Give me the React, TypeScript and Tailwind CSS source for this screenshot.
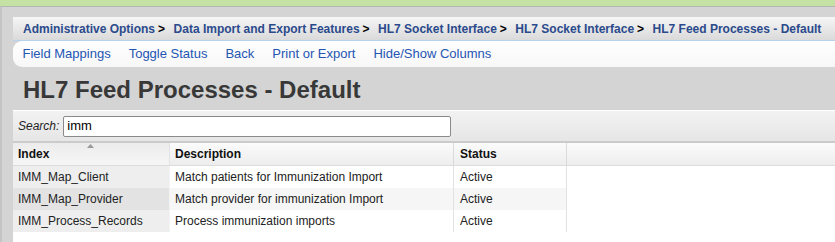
const crumbs = [
  'Administrative Options',
  'Data Import and Export Features',
  'HL7 Socket Interface',
  'HL7 Socket Interface',
  'HL7 Feed Processes - Default',
];

const actions = ['Field Mappings', 'Toggle Status', 'Back', 'Print or Export', 'Hide/Show Columns'];

const rows = [
  { index: 'IMM_Map_Client', description: 'Match patients for Immunization Import', status: 'Active' },
  { index: 'IMM_Map_Provider', description: 'Match provider for immunization Import', status: 'Active' },
  { index: 'IMM_Process_Records', description: 'Process immunization imports', status: 'Active' },
];

export default function App() {
  return (
    <div className="w-[835px] h-[242px] overflow-hidden flex flex-col bg-white font-['Liberation_Sans',Arial,sans-serif]">
      {/* top strip */}
      <div className="h-[6px] shrink-0 bg-[#c5e2a5]" />

      <div className="flex-1 flex flex-col bg-[#d4d4d4] border-t border-[#b4b4b4] border-l-2 border-l-[#c4c4c4]">
        {/* breadcrumb + toolbar */}
        <div className="pl-[11px] pt-[10px]">
          <div className="h-[24px] flex items-center pl-[10px] bg-gradient-to-b from-[#f6f6f6] to-[#dadada] border-b border-[#b5d2ef] text-[12px] font-bold text-[#2b4a8c] whitespace-nowrap">
            {crumbs.map((c, i) => (
              <span key={i} className="flex items-center">
                <span>{c}</span>
                {i < crumbs.length - 1 && <span className="text-black ml-[3px] mr-[8.5px]">&gt;</span>}
              </span>
            ))}
          </div>
          <div className="h-[26px] flex items-center pl-[0.5px] rounded-bl-[9px] rounded-tl-[9px] bg-gradient-to-b from-white to-[#f7f7f7] text-[13px] text-[#2455b3] whitespace-nowrap">
            {actions.map((a) => (
              <span key={a} className="px-[9px]">
                {a}
              </span>
            ))}
          </div>
        </div>

        {/* title */}
        <div className="h-[43px] shrink-0 flex items-center pl-[21px] pt-[2px]">
          <h1 className="text-[24px] font-bold text-[#383838] leading-none">HL7 Feed Processes - Default</h1>
        </div>

        {/* search + table panel */}
        <div className="flex-1 ml-[11px] bg-white flex flex-col">
          <div className="h-[33px] shrink-0 flex items-center pl-[5px] border-t border-white bg-gradient-to-b from-[#f2f2f2] to-[#e6e6e6] border-b-2 border-b-[#cbcbcb]">
            <span className="text-[12px] italic text-[#222] mr-[4px]">Search:</span>
            <div className="w-[388px] h-[21px] border border-[#8a8a8a] rounded-[2px] bg-white flex items-center pl-[3px] text-[13px] text-black">
              imm
            </div>
          </div>

          {/* header */}
          <div className="h-[23px] shrink-0 flex text-[12px] font-bold text-[#111] border-b border-[#dcdcdc] bg-gradient-to-b from-[#fbfbfb] to-[#ededed]">
            <div className="relative w-[157px] flex items-center pl-[5px] border-r border-[#e2e2e2] bg-gradient-to-b from-[#ececec] to-[#f6f6f6]">
              Index
              <svg className="absolute left-[74px] top-[1px]" width="7" height="4" viewBox="0 0 7 4">
                <path d="M3.5 0 L7 4 L0 4 Z" fill="#9a9a9a" />
              </svg>
            </div>
            <div className="w-[284px] flex items-center pl-[5px] border-r border-[#dadada]">Description</div>
            <div className="w-[113px] flex items-center pl-[6px] border-r border-[#dadada]">Status</div>
            <div className="flex-1" />
          </div>

          {/* rows */}
          {rows.map((r, i) => (
            <div key={r.index} className="h-[22px] shrink-0 flex text-[12px] text-[#222]">
              <div className={`w-[157px] flex items-center pl-[5px] border-r border-[#f4f4f4] ${i % 2 === 1 ? 'bg-[#e3e3e3]' : 'bg-[#eeeeee]'}`}>
                {r.index}
              </div>
              <div className={`w-[284px] flex items-center pl-[5px] border-r border-[#e2e2e2] ${i % 2 === 1 ? 'bg-[#f6f6f6]' : 'bg-white'}`}>
                {r.description}
              </div>
              <div className={`w-[113px] flex items-center pl-[6px] border-r border-[#e2e2e2] ${i % 2 === 1 ? 'bg-[#f6f6f6]' : 'bg-white'}`}>
                {r.status}
              </div>
              <div className="flex-1 bg-white" />
            </div>
          ))}
        </div>
      </div>
    </div>
  );
}
